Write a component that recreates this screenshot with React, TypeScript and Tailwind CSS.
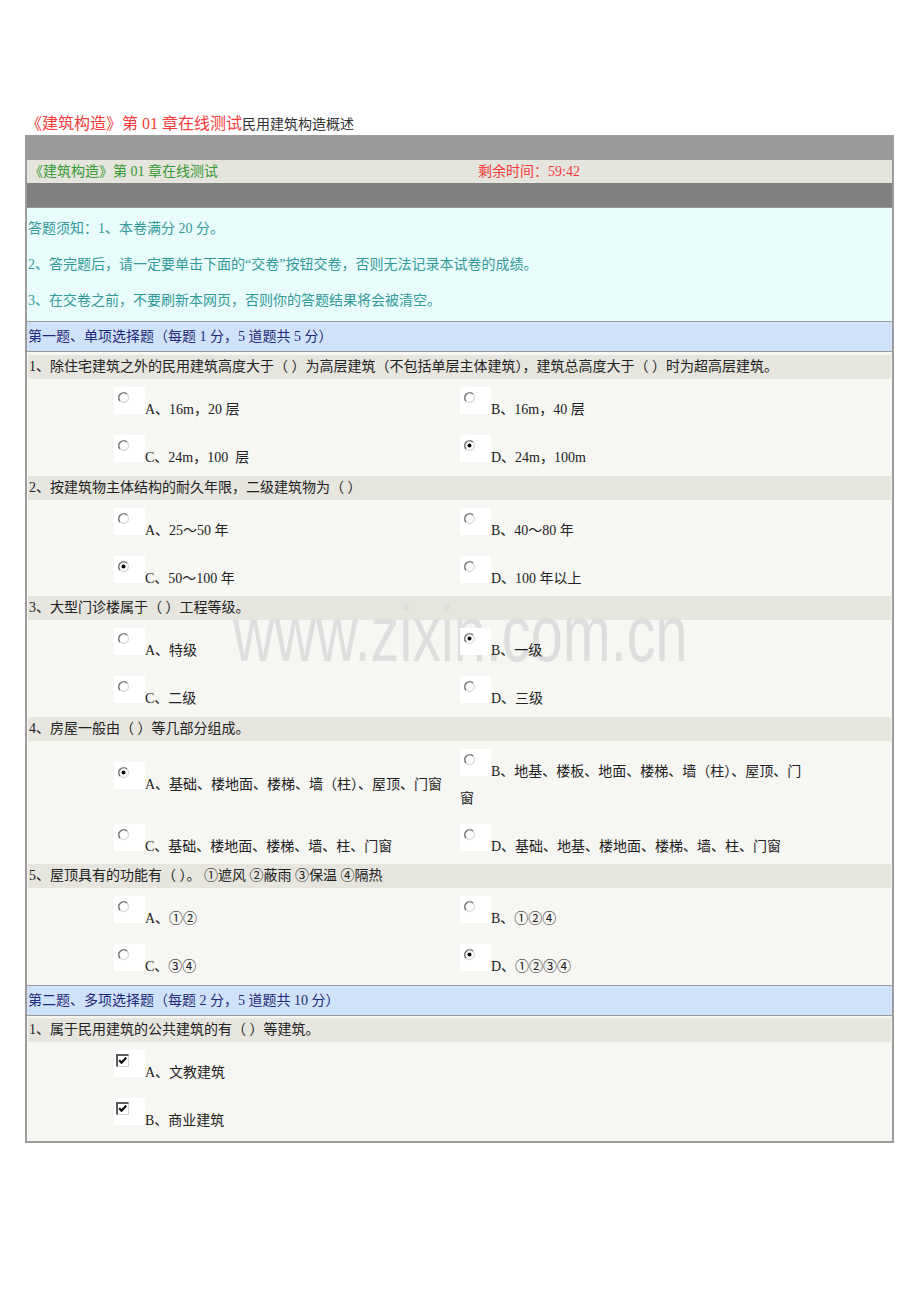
import React from 'react';

type Option = { label: string; checked?: boolean };
type Question = { text: string; options: Option[] };

const singleQuestions: Question[] = [
  {
    text: '1、除住宅建筑之外的民用建筑高度大于（ ）为高层建筑（不包括单层主体建筑），建筑总高度大于（ ）时为超高层建筑。',
    options: [
      { label: 'A、16m，20 层' },
      { label: 'B、16m，40 层' },
      { label: 'C、24m，100  层' },
      { label: 'D、24m，100m', checked: true },
    ],
  },
  {
    text: '2、按建筑物主体结构的耐久年限，二级建筑物为（ ）',
    options: [
      { label: 'A、25～50 年' },
      { label: 'B、40～80 年' },
      { label: 'C、50～100 年', checked: true },
      { label: 'D、100 年以上' },
    ],
  },
  {
    text: '3、大型门诊楼属于（ ）工程等级。',
    options: [
      { label: 'A、特级' },
      { label: 'B、一级', checked: true },
      { label: 'C、二级' },
      { label: 'D、三级' },
    ],
  },
  {
    text: '4、房屋一般由（ ）等几部分组成。',
    options: [
      { label: 'A、基础、楼地面、楼梯、墙（柱）、屋顶、门窗', checked: true },
      { label: 'B、地基、楼板、地面、楼梯、墙（柱）、屋顶、门窗' },
      { label: 'C、基础、楼地面、楼梯、墙、柱、门窗' },
      { label: 'D、基础、地基、楼地面、楼梯、墙、柱、门窗' },
    ],
  },
  {
    text: '5、屋顶具有的功能有（ ）。 ①遮风 ②蔽雨 ③保温 ④隔热',
    options: [
      { label: 'A、①②' },
      { label: 'B、①②④' },
      { label: 'C、③④' },
      { label: 'D、①②③④', checked: true },
    ],
  },
];

const multiQuestion: Question = {
  text: '1、属于民用建筑的公共建筑的有（ ）等建筑。',
  options: [
    { label: 'A、文教建筑', checked: true },
    { label: 'B、商业建筑', checked: true },
  ],
};

const RadioIcon = ({ checked }: { checked?: boolean }) => (
  <svg width="13" height="13" viewBox="0 0 13 13" className="absolute left-[3px] top-[4px]">
    <circle cx="6.5" cy="6.5" r="5" fill="#fff" stroke="#dcdcdc" strokeWidth="1.4" />
    <path d="M2.96 10.04A5 5 0 0 1 10 3" fill="none" stroke="#6e6e6e" strokeWidth="1.4" />
    {checked && <circle cx="6.5" cy="6.5" r="2" fill="#000" />}
  </svg>
);

const CheckIcon = ({ checked }: { checked?: boolean }) => (
  <svg width="13" height="13" viewBox="0 0 13 13" className="absolute left-[2px] top-[4px]">
    <rect x="0.5" y="0.5" width="12" height="12" fill="#fff" stroke="#d4d4d4" />
    <path d="M1 12.5V1H12.5" fill="none" stroke="#5a5a5a" strokeWidth="2" />
    {checked && <path d="M3.2 6.3l2.3 2.4L10.2 3.6" fill="none" stroke="#000" strokeWidth="2" />}
  </svg>
);

const OptionCell = ({ option, multi }: { option: Option; multi?: boolean }) => (
  <div className="pt-[8px] pb-[4.25px] text-[14px] leading-[27px] text-[#222]">
    <span className="relative z-10 inline-block w-[31px] h-[27px] bg-white align-baseline">
      {multi ? <CheckIcon checked={option.checked} /> : <RadioIcon checked={option.checked} />}
    </span>
    <span className="relative z-10 whitespace-pre-wrap">{option.label}</span>
  </div>
);

const QuestionRow = ({ text }: { text: string }) => (
  <div className="h-[24px] bg-[#e6e5de] pl-[1px] text-[14px] leading-[24px] text-[#222] whitespace-pre">
    {text}
  </div>
);

const SectionHeader = ({ text }: { text: string }) => (
  <div className="h-[30px] border-b border-[#999] bg-[#d0e2f9] pl-[1px] text-[14px] leading-[29px] text-[#1f2a7a] whitespace-pre">
    {text}
  </div>
);

export default function App() {
  return (
    <div className="relative min-h-[1302px] bg-white pt-[113px] px-[25px] font-['Liberation_Serif','Noto_Sans_CJK_SC',serif]">
      <div className="h-[22px] leading-[22px] pl-[1px] whitespace-pre">
        <span className="text-[16px] text-[#f53b3b]">《建筑构造》第 01 章在线测试</span>
        <span className="text-[14px] text-[#333]">民用建筑构造概述</span>
      </div>

      <div className="w-[869px] border-2 border-[#9c9c9c]">
        <div className="h-[23px] bg-[#999]" />
        <div className="grid h-[23px] grid-cols-[451px_1fr] bg-[#e6e5dd] text-[14px] leading-[23px] whitespace-pre">
          <div className="pl-[2px] text-[#339933]">《建筑构造》第 01 章在线测试</div>
          <div className="text-[#f53b3b]">剩余时间：59:42</div>
        </div>
        <div className="h-[24px] bg-[#808080]" />

        <div className="flex flex-col gap-[16px] border-y border-[#999] bg-[#e8fcfc] pt-[11px] pb-[10px] pl-[1px] text-[14px] leading-[20px] text-[#339999]">
          <p>答题须知：1、本卷满分 20 分。</p>
          <p>2、答完题后，请一定要单击下面的“交卷”按钮交卷，否则无法记录本试卷的成绩。</p>
          <p>3、在交卷之前，不要刷新本网页，否则你的答题结果将会被清空。</p>
        </div>

        <SectionHeader text="第一题、单项选择题（每题 1 分，5 道题共 5 分）" />
        <div className="border-b border-[#999] bg-[#f6f6f2] px-[1px] pt-[3px]">
          {singleQuestions.map((q) => (
            <div key={q.text}>
              <QuestionRow text={q.text} />
              <div className="ml-[86px] grid grid-cols-[346px_352px] items-center">
                {q.options.map((o) => (
                  <OptionCell key={o.label} option={o} />
                ))}
              </div>
            </div>
          ))}
        </div>

        <SectionHeader text="第二题、多项选择题（每题 2 分，5 道题共 10 分）" />
        <div className="bg-[#f6f6f2] px-[1px] pt-[2px] pb-[3px]">
          <QuestionRow text={multiQuestion.text} />
          <div className="ml-[86px] w-[346px]">
            {multiQuestion.options.map((o) => (
              <OptionCell key={o.label} option={o} multi />
            ))}
          </div>
        </div>
      </div>

      <div className="pointer-events-none absolute left-[233px] top-[594px] origin-left scale-x-[0.72] whitespace-nowrap font-['Liberation_Sans',sans-serif] text-[80px] leading-[80px] text-[#dedede] select-none">
        www.zixin.com.cn
      </div>
    </div>
  );
}
